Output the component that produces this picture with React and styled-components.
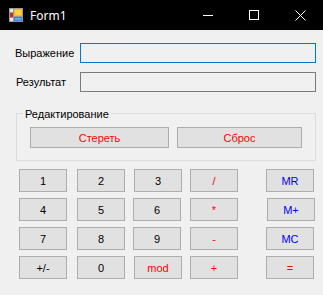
import React from "react";
import styled, { createGlobalStyle } from "styled-components";

const Global = createGlobalStyle`
  html, body { margin: 0; padding: 0; background: #f0f0f0; }
  body { font-family: "Liberation Sans", Arial, sans-serif; font-size: 11px; color: #000; }
  * { box-sizing: border-box; }
`;

const Window = styled.div`
  width: 323px;
  height: 295px;
  background: #f0f0f0;
  display: flex;
  flex-direction: column;
  overflow: hidden;
`;

const TitleBar = styled.div`
  height: 30px;
  flex-shrink: 0;
  background: #000;
  display: flex;
  align-items: center;
`;

const AppIcon = styled.svg`
  width: 14px;
  height: 14px;
  margin: -1px 0 0 9px;
  flex-shrink: 0;
`;

const Title = styled.span`
  flex: 1;
  margin-left: 7px;
  color: #fff;
  font-family: "Noto Sans", "Open Sans", sans-serif;
  font-size: 12px;
`;

const Caption = styled.div`
  width: 46px;
  height: 30px;
  display: flex;
  align-items: center;
  justify-content: center;
`;

const MinLine = styled.div`
  width: 10px;
  height: 1px;
  background: #fff;
`;

const MaxBox = styled.div`
  width: 10px;
  height: 10px;
  border: 1px solid #fff;
`;

const Body = styled.div`
  display: flex;
  flex-direction: column;
  padding: 13px 7px 0 15px;
`;

const Field = styled.div`
  display: flex;
  align-items: center;
  height: 20px;
  margin-top: ${(p) => p.$gap || 0}px;
`;

const Label = styled.span`
  width: 65px;
  padding-left: ${(p) => p.$indent || 0}px;
  white-space: nowrap;
`;

const TextBox = styled.div`
  width: 236px;
  height: 20px;
  background: #f0f0f0;
  border: 1px solid ${(p) => (p.$focused ? "#0078d7" : "#7a7a7a")};
`;

const Group = styled.div`
  margin: 21px 0 0 1px;
  width: 300px;
  border: 1px solid #dcdcdc;
  padding: 0 0 12px 13px;
  display: flex;
  flex-direction: column;
`;

const Legend = styled.span`
  align-self: flex-start;
  margin: -6px 0 0 -7px;
  padding: 0 2px;
  line-height: 13px;
  background: #f0f0f0;
`;

const GroupRow = styled.div`
  display: flex;
  gap: 8px;
  margin-top: 6px;
`;

const Btn = styled.div`
  width: ${(p) => p.$w || 48}px;
  height: ${(p) => p.$h || 23}px;
  margin-left: ${(p) => p.$dx || 0}px;
  background: #e1e1e1;
  border: 1px solid #adadad;
  display: flex;
  align-items: center;
  justify-content: center;
  color: ${(p) => p.$color || "#000"};
  font-size: 11px;
  white-space: nowrap;
`;

const Keypad = styled.div`
  display: grid;
  grid-template-columns: 58px 57px 56px 76px 48px;
  grid-auto-rows: 23px;
  row-gap: 6px;
  margin: 8px 0 0 4px;
`;

const RED = "#ff0000";
const BLUE = "#0000ff";

const keys = [
  ["1"], ["2"], ["3"], ["/", RED], ["MR", BLUE],
  ["4"], ["5"], ["6", null, -1], ["*", RED], ["M+", BLUE, 1],
  ["7"], ["8"], ["9", null, -1], ["-", RED], ["MC", BLUE],
  ["+/-"], ["0"], ["mod", RED], ["+", RED], ["=", RED],
];

export default function App() {
  return (
    <Window>
      <Global />
      <TitleBar>
        <AppIcon viewBox="0 0 14 14">
          <rect x="0" y="0" width="14" height="14" fill="#9a9a9a" />
          <rect x="1" y="1" width="3" height="3" fill="#e8e8e8" />
          <rect x="1" y="10" width="3" height="3" fill="#e8e8e8" />
          <rect x="1" y="5" width="3" height="4" fill="#d42a1e" />
          <rect x="5" y="1" width="8" height="7" fill="#f6b81e" />
          <rect x="6" y="2" width="6" height="5" fill="#fbd44c" />
          <rect x="5" y="9" width="8" height="4" fill="#3c7fd8" />
          <rect x="6" y="10" width="6" height="2" fill="#6ea6ee" />
        </AppIcon>
        <Title>Form1</Title>
        <Caption>
          <MinLine />
        </Caption>
        <Caption>
          <MaxBox />
        </Caption>
        <Caption>
          <svg width="11" height="11" viewBox="0 0 11 11">
            <path d="M0.5 0.5 L10.5 10.5 M10.5 0.5 L0.5 10.5" stroke="#fff" strokeWidth="1" />
          </svg>
        </Caption>
      </TitleBar>
      <Body>
        <Field>
          <Label>Выражение</Label>
          <TextBox $focused />
        </Field>
        <Field $gap={9}>
          <Label $indent={1}>Результат</Label>
          <TextBox />
        </Field>
        <Group>
          <Legend>Редактирование</Legend>
          <GroupRow>
            <Btn $w={139} $h={21} $color={RED}>Стереть</Btn>
            <Btn $w={125} $h={21} $color={RED}>Сброс</Btn>
          </GroupRow>
        </Group>
        <Keypad>
          {keys.map(([label, color, dx], i) => (
            <Btn key={i} $color={color || "#000"} $dx={dx || 0}>
              {label}
            </Btn>
          ))}
        </Keypad>
      </Body>
    </Window>
  );
}
